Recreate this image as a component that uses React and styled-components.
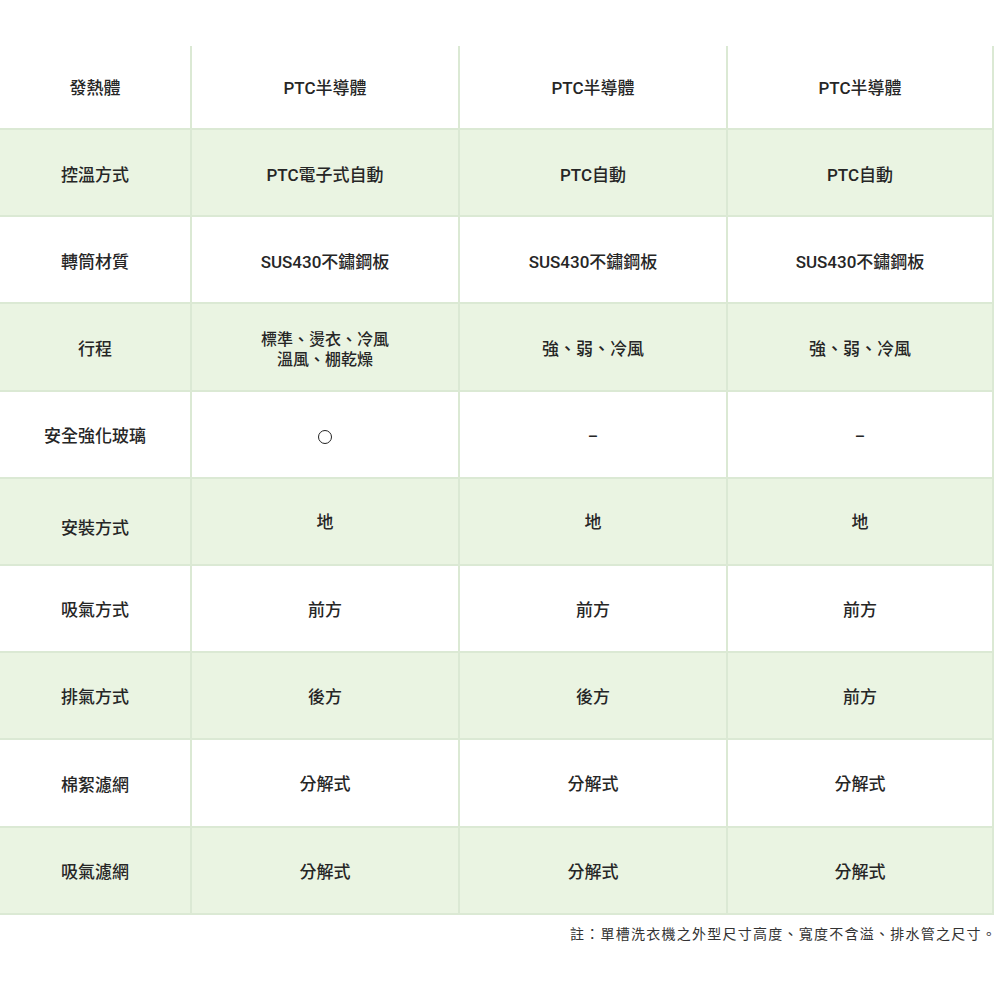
import React from "react";
import styled, { createGlobalStyle } from "styled-components";

const GlobalStyle = createGlobalStyle`
  html, body {
    margin: 0;
    padding: 0;
    background: #ffffff;
  }
  body {
    font-family: Roboto, "Noto Sans CJK TC", sans-serif;
    color: #222222;
  }
`;

const Page = styled.div`
  width: 1000px;
  padding-top: 46px;
  box-sizing: border-box;
`;

const Table = styled.div`
  display: grid;
  grid-template-columns: 192px 268px 268px 266px;
  grid-auto-rows: 87.2px;
  grid-template-rows: 84px;
  width: 994px;
`;

const Cell = styled.div`
  box-sizing: border-box;
  display: flex;
  align-items: center;
  justify-content: center;
  text-align: center;
  background: ${(p) => (p.$shaded ? "#eaf4e2" : "#ffffff")};
  border-right: 2px solid #dbe9d4;
  border-bottom: 2px solid #dbe9d4;
  font-family: Roboto, "Noto Sans CJK TC", sans-serif;
  font-size: 17px;
  font-weight: 500;
  line-height: 21px;
  color: #262626;
  padding-top: ${(p) => `${(p.$offset || 0) + 2}px`};
`;

const Label = styled(Cell)`
  font-size: 17px;
`;

const Lines = styled.span`
  font-size: 16px;
  line-height: 20px;
`;

const Dash = styled.span`
  font-size: 16px;
  font-weight: 500;
`;

const Circle = styled.span`
  display: inline-block;
  width: 12px;
  height: 12px;
  border: 1.5px solid #222222;
  border-radius: 50%;
  margin-top: 2px;
`;

const Note = styled.p`
  margin: 8px 0 0;
  width: 997px;
  text-align: right;
  font-family: "Noto Sans CJK TC", sans-serif;
  font-size: 14px;
  font-weight: 400;
  letter-spacing: 1.25px;
  line-height: 20px;
  color: #333333;
`;

const rows = [
  { label: "發熱體", values: ["PTC半導體", "PTC半導體", "PTC半導體"] },
  { label: "控溫方式", values: ["PTC電子式自動", "PTC自動", "PTC自動"], offset: 4 },
  { label: "轉筒材質", values: ["SUS430不鏽鋼板", "SUS430不鏽鋼板", "SUS430不鏽鋼板"], offset: 4 },
  {
    label: "行程",
    values: [["標準、燙衣、冷風", "溫風、棚乾燥"], "強、弱、冷風", "強、弱、冷風"],
    offset: 4,
  },
  { label: "安全強化玻璃", values: ["circle", "dash", "dash"], offset: 2 },
  { label: "安裝方式", values: ["地", "地", "地"], labelOffset: 12, offset: 0 },
  { label: "吸氣方式", values: ["前方", "前方", "前方"], offset: 2 },
  { label: "排氣方式", values: ["後方", "後方", "前方"], offset: 2 },
  { label: "棉絮濾網", values: ["分解式", "分解式", "分解式"], labelOffset: 4, offset: 2 },
  { label: "吸氣濾網", values: ["分解式", "分解式", "分解式"], offset: 2 },
];

function renderValue(v) {
  if (v === "circle") return <Circle />;
  if (v === "dash") return <Dash>–</Dash>;
  if (Array.isArray(v))
    return (
      <Lines>
        {v[0]}
        <br />
        {v[1]}
      </Lines>
    );
  return v;
}

export default function App() {
  return (
    <>
      <GlobalStyle />
      <Page>
        <Table>
          {rows.map((row, i) => {
            const shaded = i % 2 === 1;
            const off = row.offset || 0;
            const lOff = row.labelOffset !== undefined ? row.labelOffset : off;
            return (
              <React.Fragment key={row.label}>
                <Label $shaded={shaded} $offset={lOff}>
                  {row.label}
                </Label>
                {row.values.map((v, j) => (
                  <Cell key={j} $shaded={shaded} $offset={off}>
                    {renderValue(v)}
                  </Cell>
                ))}
              </React.Fragment>
            );
          })}
        </Table>
        <Note>註：單槽洗衣機之外型尺寸高度、寬度不含溢、排水管之尺寸。</Note>
      </Page>
    </>
  );
}
